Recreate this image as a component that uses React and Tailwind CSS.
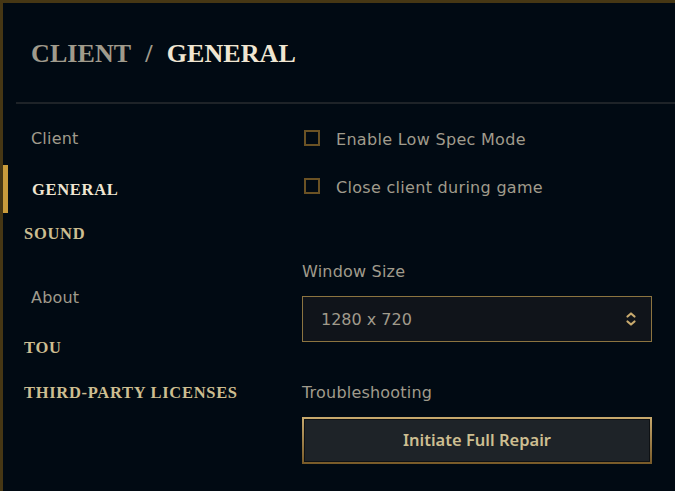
import React from "react";

const serif = { fontFamily: '"Liberation Serif", "DejaVu Serif", serif' };

const NavItem = ({ label, kind, active, className = "" }) => {
  if (kind === "group") {
    return (
      <div className={`h-[48px] flex items-center pl-[28px] pt-[3px] text-[16px] tracking-[0.2px] text-[#a09b8c] ${className}`}>
        {label}
      </div>
    );
  }
  return (
    <div className={`relative h-[40px] flex items-center pt-[3px] ${active ? "h-[48px] pl-[29px]" : "pl-[21px]"} ${className}`}>
      {active && <div className="absolute left-0 top-0 bottom-0 w-[5px] bg-[#c89b3c]" />}
      <span
        style={serif}
        className={`text-[16.5px] font-bold tracking-[0.7px] ${active ? "text-[#f0e6d2]" : "text-[#cdbe91]"}`}
      >
        {label}
      </span>
    </div>
  );
};

const Checkbox = ({ label, className = "" }) => (
  <div className={`h-[48px] flex items-center ${className}`}>
    <div className="ml-[2px] w-[16px] h-[16px] border-2 border-[#6b5224]" />
    <span className="ml-[16px] pt-[3px] text-[16px] tracking-[0.3px] text-[#a09b8c]">{label}</span>
  </div>
);

export default function App() {
  return (
    <div
      className="w-[675px] h-[491px] bg-[#010a13] border-t-[3px] border-l-[3px] border-[#463714] overflow-hidden"
      style={{ fontFamily: '"DejaVu Sans", "Noto Sans", sans-serif' }}
    >
      <div className="h-[99px] flex items-center pl-[28px] pt-[2px]">
        <h1 style={serif} className="text-[26px] font-bold tracking-[0.1px]">
          <span className="text-[#a09b8c]">CLIENT</span>
          <span className="text-[#a09b8c] mx-[14px]">/</span>
          <span className="text-[#f0e6d2]">GENERAL</span>
        </h1>
      </div>
      <div className="ml-[13px] h-[2px] bg-[#1e2328]" />
      <div className="flex">
        <div className="w-[299px] flex flex-col">
          <NavItem kind="group" label="Client" className="mt-[9px]" />
          <NavItem label="GENERAL" active className="mt-[4px]" />
          <NavItem label="SOUND" />
          <NavItem kind="group" label="About" className="mt-[19px]" />
          <NavItem label="TOU" className="mt-[7px]" />
          <NavItem label="THIRD-PARTY LICENSES" className="mt-[5px]" />
        </div>
        <div className="w-[350px] flex flex-col">
          <Checkbox label="Enable Low Spec Mode" className="mt-[10px]" />
          <Checkbox label="Close client during game" />
          <div className="mt-[50px] h-[20px] pt-[3px] flex items-center text-[16px] tracking-[0.2px] text-[#a09b8c]">Window Size</div>
          <div className="mt-[16px] h-[46px] flex items-center justify-between border border-[#8c7440] bg-[#10141a] pl-[18px] pr-[14px]">
            <span className="pt-[2px] text-[16px] text-[#a09b8c]">1280 x 720</span>
            <svg width="12" height="16" viewBox="0 0 12 16" fill="none" stroke="#c8aa6e" strokeWidth="2.2" strokeLinecap="round" strokeLinejoin="round">
              <path d="M2.5 5.5 L6 2.5 L9.5 5.5" />
              <path d="M2.5 10.5 L6 13.5 L9.5 10.5" />
            </svg>
          </div>
          <div className="mt-[39px] h-[20px] pt-[3px] flex items-center text-[16px] tracking-[0.2px] text-[#a09b8c]">Troubleshooting</div>
          <button
            type="button"
            className="mt-[16px] h-[47px] p-[2px] bg-gradient-to-b from-[#c8aa6e] to-[#785a28]"
          >
            <div
              className="h-full w-full bg-[#1e2328] border border-[#0e1114] flex items-center justify-center text-[16.5px] font-semibold text-[#cdbe91]"
              style={{ fontFamily: '"Noto Sans", sans-serif' }}
            >
              Initiate Full Repair
            </div>
          </button>
        </div>
      </div>
    </div>
  );
}
